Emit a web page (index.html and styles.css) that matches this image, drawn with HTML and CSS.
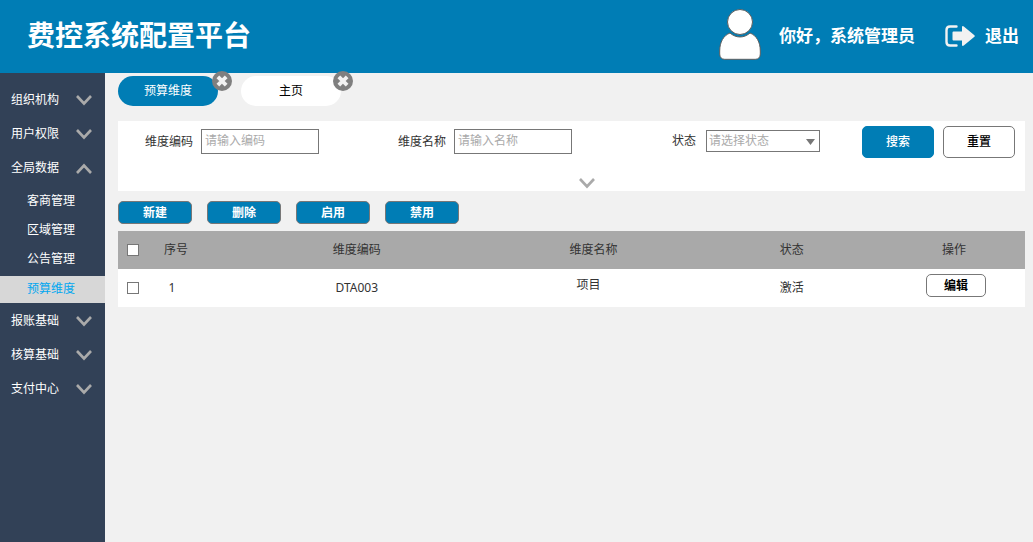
FILE: index.html
```html
<!DOCTYPE html>
<html lang="zh-CN">
<head>
<meta charset="utf-8">
<meta name="viewport" content="width=device-width, initial-scale=1">
<title>费控系统配置平台</title>
<link rel="stylesheet" href="styles.css">
</head>
<body>
<svg class="sprite" aria-hidden="true">
  <symbol id="chevron" viewBox="0 0 16 11"><path d="M1 1 8 8.500 15 1" fill="none" stroke="#aaa" stroke-width="2.600"/></symbol>
  <symbol id="close" viewBox="0 0 20 20"><circle cx="10" cy="10" r="10" fill="#7f7f7f"/><path d="M7.200 7.200l5.600 5.600M12.800 7.200l-5.600 5.600" stroke="#f2f2f2" stroke-width="3.800" stroke-linecap="square"/></symbol>
</svg>
<header class="header">
  <h1 class="title">费控系统配置平台</h1>
  <div class="account">
    <svg class="avatar" viewBox="0 0 42 51" aria-hidden="true">
      <path d="M11 24C4.500 26.500.7 33 .7 42v3c0 3.500 2 5.300 5 5.300h30.600c3 0 5-1.800 5-5.300v-3c0-9-3.800-15.500-10.300-18C25 29.300 17 29.300 11 24z" fill="#fff" stroke="#5e5e5e"/>
      <circle cx="21" cy="13" r="12.500" fill="#fff" stroke="#5e5e5e"/>
    </svg>
    <span class="greeting">你好，系统管理员</span>
    <a class="logout" href="#">
      <svg class="logout-icon" viewBox="0 0 30 22" aria-hidden="true">
        <path d="M11.500 1.500H5Q1.500 1.500 1.500 5v12Q1.500 20.500 5 20.500h6.500" fill="none" stroke="#f2f2f2" stroke-width="2.400" stroke-linecap="round"/>
        <path d="M8.500 6.500h8.500V1.800q.5-1.200 1.800-.4l10.600 8.800q.8.800 0 1.600l-10.600 8.800q-1.300.8-1.800-.4V15.500H8.500q-1 0-1-1v-7q0-1 1-1z" fill="#f2f2f2"/>
      </svg>
      <span>退出</span>
    </a>
  </div>
</header>
<div class="body">
  <nav class="sidebar">
    <button class="group" type="button">组织机构<svg class="chevron"><use href="#chevron"/></svg></button>
    <button class="group" type="button">用户权限<svg class="chevron"><use href="#chevron"/></svg></button>
    <button class="group" type="button" aria-expanded="true">全局数据<svg class="chevron up"><use href="#chevron"/></svg></button>
    <div class="submenu">
      <a class="sub" href="#">客商管理</a>
      <a class="sub" href="#">区域管理</a>
      <a class="sub" href="#">公告管理</a>
      <a class="sub active" href="#" aria-current="page">预算维度</a>
    </div>
    <button class="group" type="button">报账基础<svg class="chevron"><use href="#chevron"/></svg></button>
    <button class="group" type="button">核算基础<svg class="chevron"><use href="#chevron"/></svg></button>
    <button class="group" type="button">支付中心<svg class="chevron"><use href="#chevron"/></svg></button>
  </nav>
  <main class="content">
    <div class="tabs">
      <div class="tab-wrap">
        <button class="tab current" type="button">预算维度</button>
        <button class="close" type="button" aria-label="关闭预算维度"><svg><use href="#close"/></svg></button>
      </div>
      <div class="tab-wrap">
        <button class="tab" type="button">主页</button>
        <button class="close" type="button" aria-label="关闭主页"><svg><use href="#close"/></svg></button>
      </div>
    </div>
    <form class="search">
      <div class="fields">
        <div class="field"><label for="code">维度编码</label><input class="text" id="code" type="text" placeholder="请输入编码"></div>
        <div class="field"><label for="name">维度名称</label><input class="text" id="name" type="text" placeholder="请输入名称"></div>
        <div class="field wide"><label for="state">状态</label><span class="select-wrap"><select class="select" id="state"><option>请选择状态</option><option>激活</option><option>禁用</option></select><svg class="arrow" viewBox="0 0 9 6" aria-hidden="true"><path d="M0 0h9L4.500 6z" fill="#777"/></svg></span></div>
        <div class="actions">
          <button class="btn primary" type="button">搜索</button>
          <button class="btn" type="reset">重置</button>
        </div>
      </div>
      <button class="more" type="button" aria-label="展开"><svg class="chevron"><use href="#chevron"/></svg></button>
    </form>
    <div class="toolbar">
      <button class="tool" type="button">新建</button>
      <button class="tool" type="button">删除</button>
      <button class="tool" type="button">启用</button>
      <button class="tool" type="button">禁用</button>
    </div>
    <table class="table">
      <colgroup><col class="c-check"><col class="c-no"><col class="c-code"><col class="c-name"><col class="c-state"><col></colgroup>
      <thead>
        <tr><th><input class="check" type="checkbox" aria-label="全选"></th><th>序号</th><th>维度编码</th><th>维度名称</th><th>状态</th><th class="op">操作</th></tr>
      </thead>
      <tbody>
        <tr><td><input class="check" type="checkbox" aria-label="选择第1行"></td><td class="no">1</td><td>DTA003</td><td class="name">项目</td><td>激活</td><td class="op edit-cell"><button class="edit" type="button">编辑</button></td></tr>
      </tbody>
    </table>
  </main>
</div>
</body>
</html>
```
FILE: styles.css
```css
* { box-sizing: border-box; }
body {
  margin: 0;
  min-height: 100vh;
  display: flex;
  flex-direction: column;
  background: #f1f1f1;
  color: #333;
  font: 12px/18px "Noto Sans", "Noto Sans CJK SC", sans-serif;
}
button, input, select { font: inherit; margin: 0; }
button { padding: 0; border: 0; background: none; cursor: pointer; }
a { text-decoration: none; }
.sprite { display: none; }

.header {
  height: 73px;
  padding: 0 14px 0 27px;
  display: flex;
  justify-content: space-between;
  align-items: center;
  background: #007db5;
  color: #fff;
  font-weight: 700;
}
.title { margin: 0; padding-bottom: 4px; font-size: 28px; line-height: 40px; }
.account { display: flex; align-items: center; font-size: 17px; line-height: 24px; }
.avatar { width: 42px; height: 51px; margin: 0 18px 5px 0; }
.greeting, .logout span { padding-bottom: 2px; }
.logout { display: flex; align-items: center; gap: 10px; margin-left: 30px; color: #fff; }
.logout-icon { width: 30px; height: 22px; margin-bottom: 2px; }

.body { flex: 1; display: flex; }
.sidebar { width: 105px; flex: none; padding-top: 10px; background: #324157; }
.group {
  width: 100%;
  height: 34px;
  padding: 0 13px 0 11px;
  display: flex;
  align-items: center;
  justify-content: space-between;
  color: #fff;
}
.chevron { width: 16px; height: 11px; }
.up { transform: rotate(180deg); }
.submenu { padding: 1px 0; }
.sub { display: block; padding-left: 27px; line-height: 29px; color: #fff; }
.sub.active { margin-top: 3px; padding-bottom: 2px; line-height: 25px; background: #d7d7d7; color: #02a7f0; }

.content { flex: 1; min-width: 0; padding: 3px 8px 0 13px; }
.tabs { display: flex; gap: 23px; margin-bottom: 15px; }
.tab-wrap { position: relative; }
.tab { display: block; width: 100px; height: 30px; border-radius: 15px; background: #fff; color: #000; }
.tab.current { background: #007db5; color: #fff; }
.close { position: absolute; top: -5px; right: -14px; width: 20px; height: 20px; }
.close svg { display: block; width: 20px; height: 20px; }
.tab-wrap:last-child .close { right: -12px; }

.search { height: 70px; padding: 5px 10px 0 27px; background: #fff; }
.fields { display: grid; grid-template-columns: 253fr 274fr 190fr 153px; align-items: center; }
.field { display: flex; align-items: center; gap: 8px; padding-bottom: 1px; }
.field.wide { gap: 10px; padding-bottom: 2px; }
.text { width: 118px; height: 25px; padding: 0 3px 2px; border: 1px solid #777; background: #fff; color: #333; }
.text::placeholder { color: #aaa; opacity: 1; }
.select-wrap { position: relative; display: flex; }
.select { width: 114px; height: 22px; padding: 0 2px; border: 1px solid #777; border-radius: 0; background: #fff; color: #aaa; appearance: none; }
.arrow { position: absolute; top: 9px; right: 5px; width: 9px; height: 6px; pointer-events: none; }
.actions { display: flex; gap: 9px; }
.btn { width: 72px; height: 32px; border: 1px solid #777; border-radius: 5px; background: #fff; color: #000; font-weight: 500; }
.btn.primary { border-color: #007db5; background: #007db5; color: #fff; }
.more { display: flex; justify-content: center; width: 100%; height: 11px; margin-top: 20px; padding-left: 13px; }

.toolbar { display: flex; gap: 15px; padding: 10px 0 7px; }
.tool { width: 74px; height: 23px; border: 1px solid #777; border-radius: 5px; background: #007db5; color: #fff; font-weight: 700; line-height: 20px; }

.table { width: 100%; table-layout: fixed; border-collapse: collapse; background: #fff; text-align: center; }
.table th, .table td { height: 38px; padding: 0; font-weight: 400; vertical-align: middle; }
.table thead { background: #a9a9a9; }
.table thead th { padding-bottom: 1px; }
.c-check { width: 30px; }
.c-no { width: 56px; }
.c-code { width: 33.7%; }
.c-name { width: 18.5%; }
.c-state { width: 25.2%; }
.table .op { padding-right: 23px; }
.table .no { padding-right: 8px; }
.table .name { padding: 0 10px 6px 0; }
.table .edit-cell { padding: 0 19px 5px 0; }
.check { display: block; width: 12px; height: 12px; margin: 0 auto; border: 1px solid #777; background: #fff; appearance: none; }
.check:checked { background: #007db5; }
.edit { width: 60px; height: 23px; border: 1px solid #777; border-radius: 5px; background: #fff; color: #000; font-weight: 700; line-height: 20px; vertical-align: middle; }
```
